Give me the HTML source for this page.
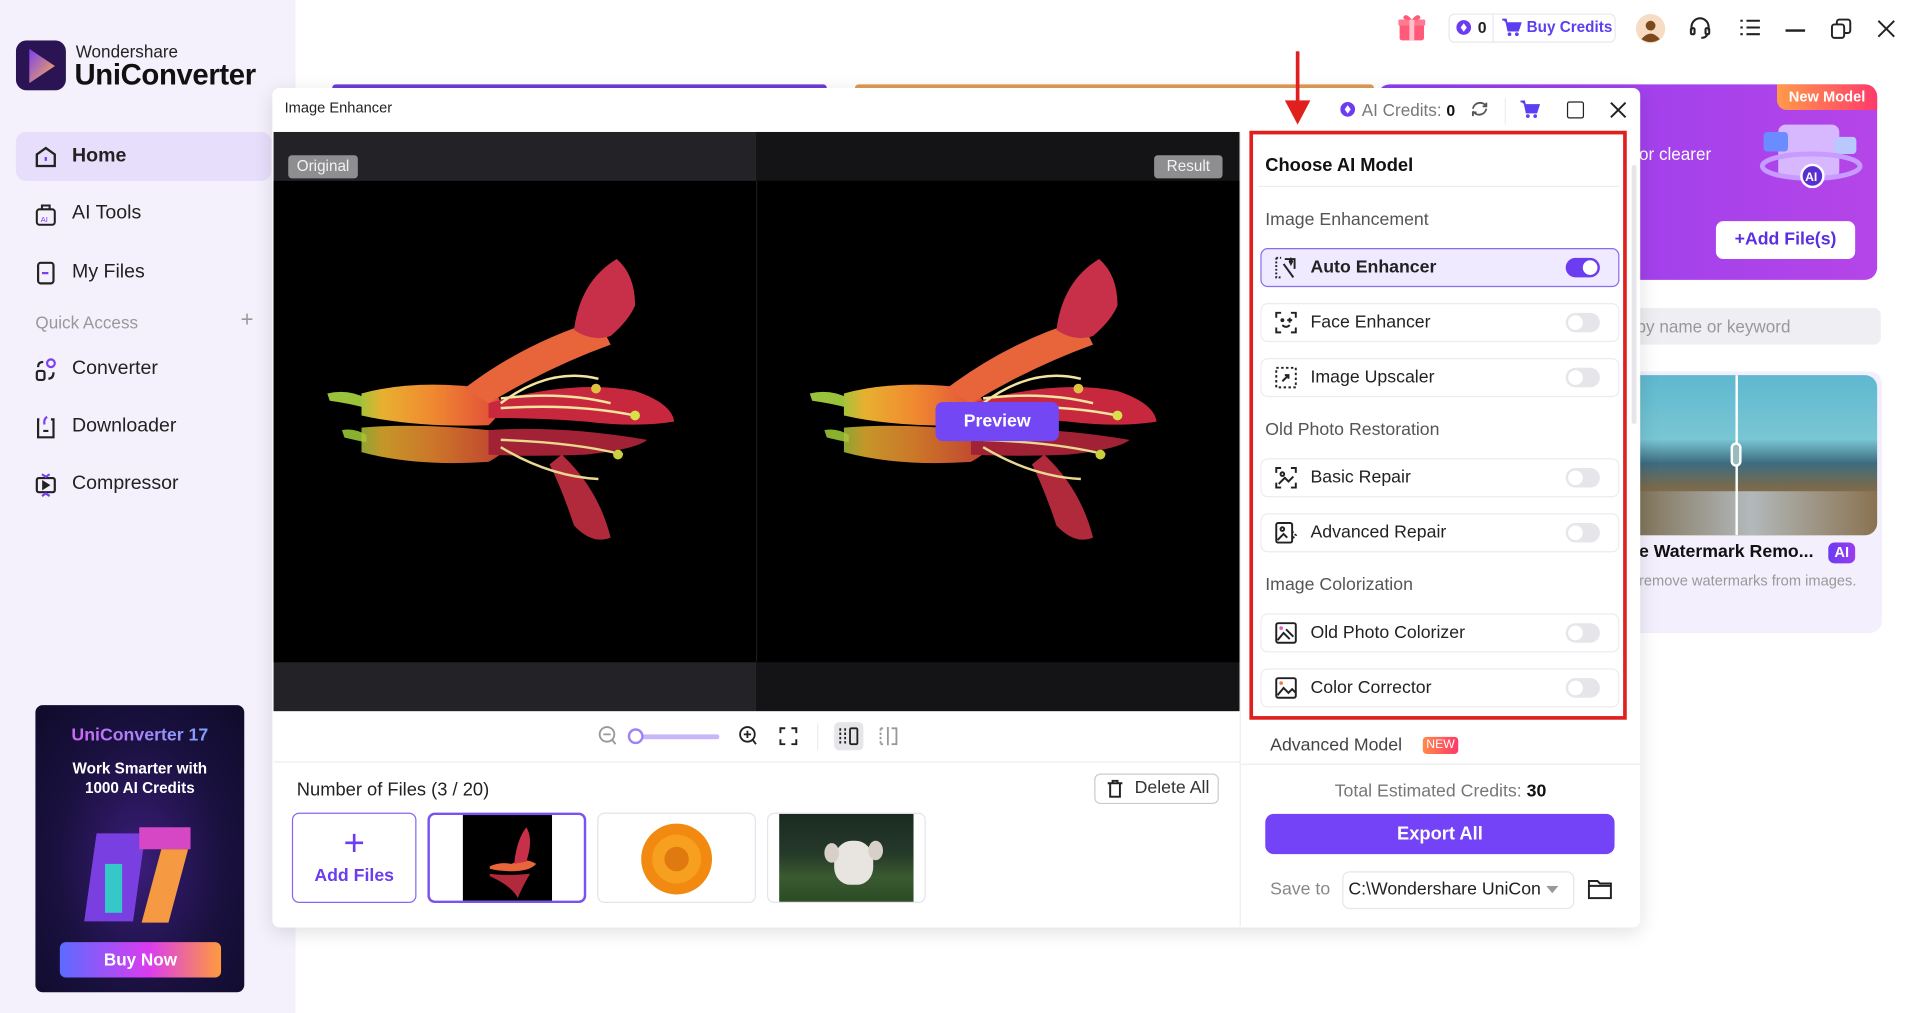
<!DOCTYPE html>
<html><head><meta charset="utf-8">
<style>
*{box-sizing:border-box;margin:0;padding:0}
html,body{width:1915px;height:1013px;overflow:hidden;background:#fff;font-family:"Liberation Sans",sans-serif;color:#222}
#s{position:absolute;left:0;top:0;width:1568px;height:829px;transform:scale(1.22130,1.22195);transform-origin:0 0}
.a{position:absolute}
.side{left:0;top:0;width:242px;height:829px;background:#f4f1fc}
.nav{left:13px;width:209px;height:40px;display:flex;align-items:center;padding-left:14px;font-size:16px;color:#222}
.nav svg{width:21px;height:21px;margin-right:11px}
.row{position:absolute;left:1032px;width:294px;height:32px;border:1px solid #ececf0;border-radius:6px;display:flex;align-items:center;padding-left:10px;font-size:14.5px;color:#222;background:#fff}
.row svg{width:20px;height:20px;margin-right:10px}
.tg{position:absolute;right:15px;top:7px;width:28px;height:16px;border-radius:8px;background:#e6e6ea}
.tg::after{content:"";position:absolute;left:2px;top:2px;width:12px;height:12px;border-radius:50%;background:#fff}
.tg.on{background:#6b3cf0}
.tg.on::after{left:14px}
.sec{position:absolute;left:1036px;font-size:14.5px;color:#555}
.th{position:absolute;top:665px;height:74px;border:1px solid #e4e4ea;border-radius:6px;overflow:hidden;background:#fff}
</style></head><body><div id="s">

<!-- sidebar -->
<div class="a side"></div>
<svg class="a" style="left:13px;top:33px" width="41" height="41" viewBox="0 0 41 41"><defs><linearGradient id="lg" x1="0" y1="0" x2="1" y2="1"><stop offset="0" stop-color="#7b3ff2"/><stop offset="1" stop-color="#ffb347"/></linearGradient></defs><rect width="41" height="41" rx="9" fill="#2a1454"/><path d="M11 7 L32 21 L11 35 Z" fill="url(#lg)"/></svg>
<div class="a" style="left:62px;top:34px;font-size:14px;color:#222">Wondershare</div>
<div class="a" style="left:61px;top:48px;font-size:24px;font-weight:bold;color:#111;letter-spacing:-0.3px">UniConverter</div>
<div class="a nav" style="top:108px;background:#e7defb;border-radius:8px;font-weight:bold"><svg viewBox="0 0 20 20" fill="none" stroke="#222" stroke-width="1.8"><path d="M3 8 L10 3 L17 8 V17 H3 Z"/><path d="M10 10 V13" stroke="#7b3ff2"/></svg>Home</div>
<div class="a nav" style="top:155px"><svg viewBox="0 0 20 20" fill="none" stroke="#222" stroke-width="1.6"><rect x="3" y="6" width="14" height="12" rx="2"/><path d="M7 6 V3 H13 V6"/><text x="6" y="16" font-size="6" fill="#7b3ff2" stroke="none" font-family="Liberation Sans">AI</text></svg>AI Tools</div>
<div class="a nav" style="top:203px"><svg viewBox="0 0 20 20" fill="none" stroke="#222" stroke-width="1.7"><rect x="4" y="2" width="12" height="16" rx="2"/><path d="M7 10 H12" stroke="#7b3ff2"/></svg>My Files</div>
<div class="a" style="left:29px;top:256px;font-size:14px;color:#999">Quick Access</div>
<div class="a" style="left:197px;top:251px;font-size:18px;color:#999">+</div>
<div class="a nav" style="top:282px"><svg viewBox="0 0 20 20" fill="none" stroke="#222" stroke-width="1.7"><circle cx="14" cy="5" r="3" stroke="#7b3ff2"/><rect x="3" y="11" width="6" height="7" rx="1.5"/><path d="M4 8 Q4 4 8 4 M16 12 Q16 17 12 17"/></svg>Converter</div>
<div class="a nav" style="top:329px"><svg viewBox="0 0 20 20" fill="none" stroke="#222" stroke-width="1.7"><path d="M5 4 H4 V18 H16 V4 H14"/><path d="M11 2 Q8 4 9 8" stroke="#7b3ff2"/><path d="M8 13 H12"/></svg>Downloader</div>
<div class="a nav" style="top:376px"><svg viewBox="0 0 20 20" fill="none" stroke="#222" stroke-width="1.7"><rect x="3" y="5" width="14" height="11" rx="1.5"/><path d="M8 8 L12 10.5 L8 13 Z" fill="#222"/><path d="M7 2 L10 4 L13 2 M7 19 L10 17 L13 19" stroke="#7b3ff2"/></svg>Compressor</div>

<!-- promo -->
<div class="a" style="left:29px;top:577px;width:171px;height:235px;border-radius:6px;background:radial-gradient(ellipse at 50% 55%,#3a1d78 0%,#1a1140 55%,#0f0b2a 100%);overflow:hidden">
<div class="a" style="left:0;width:171px;top:17px;text-align:center;font-size:14.5px;font-weight:bold;background:linear-gradient(90deg,#e455f5,#6ab4ff);-webkit-background-clip:text;color:transparent">UniConverter 17</div>
<div class="a" style="left:0;width:171px;top:44px;text-align:center;font-size:12.5px;font-weight:bold;color:#fff;line-height:16px">Work Smarter with<br>1000 AI Credits</div>
<div class="a" style="left:35px;top:95px;width:100px;height:85px;">
<div class="a" style="left:10px;top:10px;width:40px;height:72px;background:#7a3fe0;transform:skewX(-8deg)"></div>
<div class="a" style="left:50px;top:5px;width:42px;height:18px;background:#d547c4"></div>
<div class="a" style="left:60px;top:23px;width:22px;height:60px;background:#f59a42;transform:skewX(-15deg)"></div>
<div class="a" style="left:22px;top:35px;width:14px;height:40px;background:#36c7c9"></div>
</div>
<div class="a" style="left:20px;top:194px;width:132px;height:29px;border-radius:5px;background:linear-gradient(90deg,#5c6bff,#d93cf0 55%,#ff9a3c);color:#fff;font-weight:bold;font-size:14px;text-align:center;line-height:29px">Buy Now</div>
</div>

<!-- top bar -->
<svg class="a" style="left:1143px;top:9px" width="26" height="26" viewBox="0 0 26 26"><rect x="3" y="10" width="20" height="14" rx="2" fill="#ff5a7a"/><rect x="2" y="7" width="22" height="5" rx="1" fill="#ff7a90"/><rect x="11" y="7" width="4" height="17" fill="#ffc0cc"/><path d="M13 7 Q8 1 6 5 Q6 8 13 7 Q18 1 20 5 Q20 8 13 7" fill="#ff5a7a"/></svg>
<div class="a" style="left:1186px;top:11px;width:137px;height:24px;border:1px solid #e8e8ee;border-radius:5px"></div>
<div class="a" style="left:1222px;top:12px;width:1px;height:22px;background:#e8e8ee"></div>
<svg class="a" style="left:1192px;top:16px" width="13" height="13"><circle cx="6.5" cy="6.5" r="6" fill="#6b3cf0"/><path d="M6.5 3 L9 6.5 L6.5 10 L4 6.5Z" fill="#fff"/></svg>
<div class="a" style="left:1210px;top:15px;font-size:13px;font-weight:bold">0</div>
<svg class="a" style="left:1229px;top:15px" width="17" height="15" viewBox="0 0 17 15"><path d="M1 1 H4 L6 10 H14 L16 4 H5" fill="#5b3ff0" stroke="#5b3ff0" stroke-width="1.5"/><circle cx="7" cy="13" r="1.5" fill="#5b3ff0"/><circle cx="13" cy="13" r="1.5" fill="#5b3ff0"/></svg>
<div class="a" style="left:1250px;top:15px;font-size:12.5px;font-weight:bold;color:#5b3ff0">Buy Credits</div>
<svg class="a" style="left:1339px;top:11px" width="25" height="25"><circle cx="12.5" cy="12.5" r="12" fill="#f6dcc2"/><circle cx="12.5" cy="10" r="4" fill="#7a4a1e"/><path d="M5 21 Q12.5 12 20 21 Q12.5 26 5 21" fill="#7a4a1e"/></svg>
<svg class="a" style="left:1382px;top:13px" width="20" height="20" fill="none" stroke="#222" stroke-width="1.7"><path d="M3 12 V9 A7 7 0 0 1 17 9 V12"/><rect x="2.5" y="10" width="3" height="5" rx="1"/><rect x="14.5" y="10" width="3" height="5" rx="1"/><path d="M16 15 Q15 18 11 18"/></svg>
<svg class="a" style="left:1424px;top:14px" width="18" height="17" stroke="#222" stroke-width="1.7"><path d="M1 3 H3 M6 3 H17 M1 8.5 H3 M6 8.5 H17 M1 14 H3 M6 14 H17"/></svg>
<div class="a" style="left:1462px;top:24px;width:16px;height:1.7px;background:#222"></div>
<svg class="a" style="left:1499px;top:15px" width="17" height="17" fill="none" stroke="#222" stroke-width="1.6"><rect x="1" y="5" width="10" height="11" rx="2"/><path d="M5 5 V3 A2 2 0 0 1 7 1 H14 A2 2 0 0 1 16 3 V10 A2 2 0 0 1 14 12 H11"/></svg>
<svg class="a" style="left:1537px;top:16px" width="15" height="15" stroke="#222" stroke-width="1.6"><path d="M1 1 L14 14 M14 1 L1 14"/></svg>

<!-- background cards -->
<div class="a" style="left:272px;top:69px;width:405px;height:4px;border-radius:3px 3px 0 0;background:#6b3cd6"></div>
<div class="a" style="left:700px;top:69px;width:425px;height:4px;border-radius:3px 3px 0 0;background:#e09a52"></div>
<div class="a" style="left:1128px;top:69px;width:409px;height:160px;border-radius:10px;background:linear-gradient(90deg,#8e3cf0,#b545e8)"></div>
<div class="a" style="left:1455px;top:69px;width:82px;height:21px;border-radius:0 10px 0 8px;background:linear-gradient(90deg,#ff9a4a,#ff3a6a);color:#fff;font-size:12px;font-weight:bold;text-align:center;line-height:21px">New Model</div>
<div class="a" style="left:1342px;top:118px;font-size:14px;color:#fff">or clearer</div>
<svg class="a" style="left:1440px;top:96px" width="86" height="62"><rect x="16" y="6" width="50" height="44" rx="6" fill="#d7b8ff"/><rect x="4" y="12" width="20" height="16" rx="3" fill="#6a8cff"/><rect x="62" y="16" width="18" height="14" rx="3" fill="#b9c9ff"/><ellipse cx="43" cy="40" rx="40" ry="10" fill="none" stroke="#c79bff" stroke-width="4"/><circle cx="44" cy="48" r="9" fill="#5a2fd0" stroke="#fff" stroke-width="2"/><text x="38" y="52" font-size="10" font-weight="bold" fill="#fff" font-family="Liberation Sans">AI</text></svg>
<div class="a" style="left:1405px;top:181px;width:114px;height:31px;border-radius:6px;background:#fff;color:#5b2fe0;font-size:14.5px;font-weight:bold;text-align:center;line-height:31px">+Add File(s)</div>
<div class="a" style="left:1330px;top:252px;width:210px;height:30px;border-radius:6px;background:#efeff3"></div>
<div class="a" style="left:1340px;top:259px;font-size:14px;color:#999">by name or keyword</div>
<div class="a" style="left:1330px;top:304px;width:211px;height:214px;border-radius:10px;background:#f3effd"></div>
<div class="a" style="left:1330px;top:307px;width:207px;height:131px;border-radius:0 10px 10px 0;overflow:hidden;background:linear-gradient(180deg,#5fb8cf 0%,#79c6d4 40%,#3d6c80 55%,#7a6a4c 70%,#9a8058 100%)">
<div class="a" style="left:0;top:95px;width:207px;height:36px;background:linear-gradient(90deg,#7a6a4c,#b2b9bb 50%,#8a7250)"></div>
<div class="a" style="left:91px;top:0;width:2px;height:131px;background:#fff"></div>
<div class="a" style="left:87px;top:55px;width:9px;height:20px;border-radius:5px;border:2px solid #fff;background:#9bb"></div>
</div>
<div class="a" style="left:1342px;top:444px;font-size:14.5px;font-weight:bold;color:#111">e Watermark Remo...</div>
<div class="a" style="left:1497px;top:444px;width:22px;height:17px;border-radius:5px;background:linear-gradient(90deg,#6a3cf0,#9b3cf0);color:#fff;font-size:12px;font-weight:bold;text-align:center;line-height:17px">AI</div>
<div class="a" style="left:1342px;top:468px;font-size:12px;color:#999">remove watermarks from images.</div>

<!-- modal -->
<div class="a" style="left:223px;top:72px;width:1120px;height:687px;background:#fff;border-radius:6px;box-shadow:0 4px 16px rgba(0,0,0,.12)"></div>
<div class="a" style="left:233px;top:81px;font-size:12px;color:#222">Image Enhancer</div>
<svg class="a" style="left:1097px;top:83px" width="13" height="13"><circle cx="6.5" cy="6.5" r="6" fill="#6b3cf0"/><path d="M6.5 3 L9 6.5 L6.5 10 L4 6.5Z" fill="#fff"/></svg>
<div class="a" style="left:1115px;top:82px;font-size:14px;color:#777">AI Credits: <b style="color:#111;font-size:13px">0</b></div>
<svg class="a" style="left:1204px;top:82px" width="15" height="15" fill="none" stroke="#555" stroke-width="1.5"><path d="M13 7 A6 6 0 0 1 2 9 M2 7 A6 6 0 0 1 13 5"/><path d="M13 2 V5 H10 M2 13 V10 H5"/></svg>
<div class="a" style="left:1232px;top:80px;width:1px;height:22px;background:#eee"></div>
<svg class="a" style="left:1244px;top:82px" width="17" height="15" viewBox="0 0 17 15"><path d="M1 1 H4 L6 10 H14 L16 4 H5" fill="#5b3ff0" stroke="#5b3ff0" stroke-width="1.5"/><circle cx="7" cy="13" r="1.5" fill="#5b3ff0"/><circle cx="13" cy="13" r="1.5" fill="#5b3ff0"/></svg>
<div class="a" style="left:1283px;top:83px;width:14px;height:14px;border:1.7px solid #222;border-radius:2px"></div>
<svg class="a" style="left:1318px;top:83px" width="14" height="14" stroke="#222" stroke-width="1.6"><path d="M1 1 L13 13 M13 1 L1 13"/></svg>

<!-- image viewer -->
<div class="a" style="left:224px;top:108px;width:395px;height:474px;background:#232227"></div>
<div class="a" style="left:619px;top:108px;width:396px;height:474px;background:#141416"></div>
<div class="a" style="left:224px;top:148px;width:791px;height:394px;background:#000"></div>
<div class="a" style="left:619px;top:148px;width:1px;height:394px;background:#1a1a1a"></div>
<div class="a" style="left:236px;top:127px;width:57px;height:19px;border-radius:3px;background:#8e8e90;color:#f2f2f2;font-size:12.5px;text-align:center;line-height:19px">Original</div>
<div class="a" style="left:945px;top:127px;width:56px;height:19px;border-radius:3px;background:#8e8e90;color:#f2f2f2;font-size:12.5px;text-align:center;line-height:19px">Result</div>
<svg class="a" style="left:224px;top:148px" width="791" height="394" viewBox="224 148 791 394">
<defs>
<linearGradient id="tube" x1="0" y1="0" x2="1" y2="0"><stop offset="0" stop-color="#a8c23a"/><stop offset=".15" stop-color="#e8b030"/><stop offset=".5" stop-color="#f08a30"/><stop offset="1" stop-color="#e04a3a"/></linearGradient>
<g id="fl">
<path d="M268 322 Q285 318 300 326 L300 334 Q285 330 270 328Z" fill="#9ac23a"/>
<path d="M296 322 Q340 310 400 318 Q420 330 400 348 Q340 350 296 340Z" fill="url(#tube)"/>
<path d="M380 318 Q430 280 490 262 L500 282 Q450 300 400 330Z" fill="#e8643a"/>
<path d="M470 270 Q475 230 505 212 Q520 225 520 250 Q515 262 500 275 Q485 280 470 270Z" fill="#c8304a"/>
<path d="M400 330 Q470 310 520 320 Q550 330 552 345 Q520 350 480 345 Q440 342 400 342Z" fill="#c8283e"/>
<path d="M410 326 Q460 320 500 330 M410 334 Q470 330 520 340 M410 330 Q450 300 490 310" stroke="#f4e4a0" stroke-width="2" fill="none"/>
<circle cx="520" cy="340" r="4" fill="#d8e04a"/><circle cx="488" cy="318" r="4" fill="#e0c040"/>
<path d="M280 352 Q290 350 300 356 L300 362 Q290 360 282 358Z" fill="#8ab030"/>
<path d="M296 350 Q340 346 400 352 Q430 362 400 378 Q340 382 296 370Z" fill="url(#tube)" opacity=".85"/>
<path d="M400 352 Q460 348 530 360 Q520 368 480 372 Q440 374 400 372Z" fill="#a02234"/>
<path d="M460 372 Q490 400 500 440 Q485 446 470 430 Q460 400 450 380Z" fill="#b02a3c"/>
<path d="M410 360 Q470 362 510 372 M410 366 Q450 390 490 392" stroke="#e8d890" stroke-width="2" fill="none"/>
<circle cx="506" cy="372" r="4" fill="#c8d040"/>
</g>
</defs>
<use href="#fl"/>
<use href="#fl" transform="translate(395,0)"/>
</svg>
<div class="a" style="left:766px;top:329px;width:101px;height:32px;border-radius:6px;background:#7447f5;color:#fff;font-size:14.5px;font-weight:bold;text-align:center;line-height:32px">Preview</div>

<!-- toolbar -->
<svg class="a" style="left:490px;top:594px" width="16" height="17" fill="none" stroke="#999" stroke-width="1.5"><circle cx="7" cy="7" r="6"/><path d="M4 7 H10 M11 11 L14 15"/></svg>
<div class="a" style="left:517px;top:601px;width:72px;height:4px;border-radius:2px;background:#c8b6fb"></div>
<div class="a" style="left:514px;top:596px;width:13px;height:13px;border-radius:50%;border:2px solid #9f83f5;background:#fff"></div>
<svg class="a" style="left:605px;top:594px" width="16" height="17" fill="none" stroke="#222" stroke-width="1.5"><circle cx="7" cy="7" r="6"/><path d="M4 7 H10 M7 4 V10 M11 11 L14 15"/></svg>
<svg class="a" style="left:638px;top:595px" width="15" height="15" fill="none" stroke="#222" stroke-width="1.6"><path d="M1 5 V1 H5 M10 1 H14 V5 M14 10 V14 H10 M5 14 H1 V10"/></svg>
<div class="a" style="left:669px;top:592px;width:1px;height:22px;background:#eee"></div>
<div class="a" style="left:683px;top:591px;width:24px;height:23px;border-radius:4px;background:#e6e6ea"></div>
<svg class="a" style="left:686px;top:595px" width="18" height="15" fill="none" stroke="#222" stroke-width="1.5"><path d="M2 1 V14 M6 1 V14" stroke-dasharray="2 1.5"/><rect x="10" y="1" width="6" height="13" rx="1"/></svg>
<svg class="a" style="left:719px;top:595px" width="18" height="15" fill="none" stroke="#999" stroke-width="1.5"><path d="M2 1 H5 M2 14 H5 M2 1 V14" stroke-dasharray="2 1.5"/><path d="M8 0 V15"/><path d="M11 1 H15 V14 H11"/></svg>
<div class="a" style="left:224px;top:623px;width:791px;height:1px;background:#eee"></div>
<div class="a" style="left:1015px;top:108px;width:1px;height:650px;background:#eee"></div>

<div class="a" style="left:243px;top:638px;font-size:15px;color:#222">Number of Files (3 / 20)</div>
<div class="a" style="left:896px;top:633px;width:102px;height:25px;border:1px solid #ccc;border-radius:5px;font-size:14.5px;color:#333;line-height:23px;padding-left:32px">Delete All</div>
<svg class="a" style="left:906px;top:638px" width="14" height="15" fill="none" stroke="#222" stroke-width="1.6"><path d="M1 3 H13 M5 3 V1 H9 V3 M3 3 V14 H11 V3"/></svg>
<div class="th" style="left:239px;width:102px;border:1.5px solid #8a66f0;text-align:center;color:#6b3cf0">
<div style="font-size:30px;line-height:30px;margin-top:10px;font-weight:300">+</div><div style="font-size:14.5px;font-weight:bold;margin-top:3px">Add Files</div></div>
<div class="th" style="left:350px;width:130px;border:2px solid #7a52f0"><div class="a" style="left:27px;top:0;width:73px;height:72px;background:#000"></div>
<svg class="a" style="left:27px;top:0" width="73" height="72"><path d="M22 42 Q30 38 40 40 Q50 34 60 40 Q55 46 40 46 Q30 46 22 44Z" fill="#e8643a"/><path d="M42 40 Q44 20 52 10 Q58 20 52 38Z" fill="#c8304a"/><path d="M22 48 Q35 50 55 48 Q48 60 45 68 Q40 58 22 50Z" fill="#b02a3c"/></svg></div>
<div class="th" style="left:489px;width:130px"><svg class="a" style="left:33px;top:6px" width="62" height="62"><circle cx="31" cy="31" r="29" fill="#f28a12"/><circle cx="31" cy="31" r="20" fill="#f7a020"/><circle cx="31" cy="31" r="10" fill="#e07a10"/></svg></div>
<div class="th" style="left:628px;width:130px;border:1px solid #e4e4ea"><div class="a" style="left:9px;top:0;width:110px;height:74px;background:linear-gradient(180deg,#1a2a20 0%,#263a2a 45%,#3a5a30 70%,#2a4a25 100%)"></div><div class="a" style="left:54px;top:22px;width:32px;height:36px;border-radius:45% 45% 40% 40%;background:#e8e4e0"></div><div class="a" style="left:46px;top:24px;width:12px;height:16px;border-radius:50%;background:#d8d0c8"></div><div class="a" style="left:82px;top:22px;width:12px;height:16px;border-radius:50%;background:#d8d0c8"></div></div>

<!-- right panel -->
<div class="a" style="left:1336px;top:135px;width:4px;height:212px;border-radius:2px;background:#e6e6ea"></div>
<div class="a" style="left:1023px;top:107px;width:309px;height:482px;border:3px solid #e0201e"></div>
<div class="a" style="left:1036px;top:127px;font-size:15px;font-weight:bold;color:#111">Choose AI Model</div>
<div class="a" style="left:1030px;top:152px;width:296px;height:1px;background:#eee"></div>
<div class="sec" style="top:172px">Image Enhancement</div>
<div class="row" style="top:203px;background:#efeaff;border:1.5px solid #8a6cf0;font-weight:bold"><svg viewBox="0 0 20 20" fill="none" stroke="#222" stroke-width="1.6"><path d="M2 2 V18 H6 M2 2 H6" stroke-dasharray="1.5 1.5"/><path d="M9 3 H17 V11"/><path d="M8 7 L16 18"/><path d="M13 5 L14 3 L15 5 L14 7Z" fill="#222"/></svg>Auto Enhancer<div class="tg on"></div></div>
<div class="row" style="top:248px"><svg viewBox="0 0 20 20" fill="none" stroke="#222" stroke-width="1.6"><path d="M2 6 V2 H6 M14 2 H18 V6 M18 14 V18 H14 M6 18 H2 V14"/><path d="M7 12 Q10 15 13 12"/><circle cx="7" cy="8" r=".8" fill="#222"/><path d="M13 6 V10 M11 8 H15"/></svg>Face Enhancer<div class="tg"></div></div>
<div class="row" style="top:293px"><svg viewBox="0 0 20 20" fill="none" stroke="#222" stroke-width="1.6"><rect x="2" y="2" width="16" height="16" stroke-dasharray="2 2"/><path d="M7 13 L12 8 M9 8 H12 V11"/></svg>Image Upscaler<div class="tg"></div></div>
<div class="sec" style="top:344px">Old Photo Restoration</div>
<div class="row" style="top:375px"><svg viewBox="0 0 20 20" fill="none" stroke="#222" stroke-width="1.6"><path d="M6 2 H2 V6 M14 2 H18 V6 M18 14 V18 H14 M6 18 H2 V14"/><path d="M4 15 L9 10 L12 13 L16 9"/><circle cx="7" cy="7" r="1.5"/></svg>Basic Repair<div class="tg"></div></div>
<div class="row" style="top:420px"><svg viewBox="0 0 20 20" fill="none" stroke="#222" stroke-width="1.6"><rect x="2" y="2" width="13" height="16" rx="1.5"/><path d="M3 16 L8 11 L11 14"/><circle cx="7" cy="7" r="1.5"/><path d="M15 9 L18 12 L15 15" stroke-dasharray="1.5 1.5"/></svg>Advanced Repair<div class="tg"></div></div>
<div class="sec" style="top:471px">Image Colorization</div>
<div class="row" style="top:502px"><svg viewBox="0 0 20 20" fill="none" stroke="#222" stroke-width="1.6"><rect x="2" y="2" width="16" height="16" rx="1.5"/><path d="M3 16 L8 10 L13 15 M10 7 L16 13"/><circle cx="6" cy="6" r="1.5" fill="#e05ad0" stroke="none"/></svg>Old Photo Colorizer<div class="tg"></div></div>
<div class="row" style="top:547px"><svg viewBox="0 0 20 20" fill="none" stroke="#222" stroke-width="1.6"><rect x="2" y="2" width="16" height="16" rx="1.5"/><path d="M3 16 L8 10 L12 14 L15 11 L18 14"/><circle cx="6" cy="6" r="1.5" fill="#f07a4a" stroke="none"/></svg>Color Corrector<div class="tg"></div></div>

<!-- red arrow -->
<div class="a" style="left:1061px;top:42px;width:3px;height:44px;background:#e0201e"></div>
<svg class="a" style="left:1052px;top:82px" width="21" height="20"><path d="M0 0 H21 L10.5 20Z" fill="#e0201e"/></svg>

<div class="a" style="left:1040px;top:602px;font-size:14.5px;color:#444">Advanced Model</div>
<div class="a" style="left:1165px;top:603px;width:29px;height:14px;border-radius:3px;background:linear-gradient(90deg,#ff8a4a,#ff3a6a);color:#fff;font-size:10px;text-align:center;line-height:14px">NEW</div>
<div class="a" style="left:1016px;top:625px;width:327px;height:1px;background:#eee"></div>
<div class="a" style="left:1016px;top:640px;width:327px;text-align:center;font-size:14.5px;color:#777">Total Estimated Credits: <b style="color:#111">30</b></div>
<div class="a" style="left:1036px;top:666px;width:286px;height:33px;border-radius:7px;background:#7442f7;color:#fff;font-size:15px;font-weight:bold;text-align:center;line-height:33px">Export All</div>
<div class="a" style="left:1040px;top:720px;font-size:14.5px;color:#888">Save to</div>
<div class="a" style="left:1099px;top:713px;width:190px;height:31px;border:1px solid #e6e6ea;border-radius:6px;font-size:14.5px;color:#222;line-height:29px;padding-left:4px">C:\Wondershare UniCon</div>
<svg class="a" style="left:1266px;top:725px" width="10" height="6"><path d="M0 0 H10 L5 6Z" fill="#999"/></svg>
<svg class="a" style="left:1300px;top:719px" width="20" height="17" fill="none" stroke="#222" stroke-width="1.6"><path d="M1 2 H8 L10 4 H19 V16 H1 Z M1 6 H19"/></svg>

</div></body></html>
